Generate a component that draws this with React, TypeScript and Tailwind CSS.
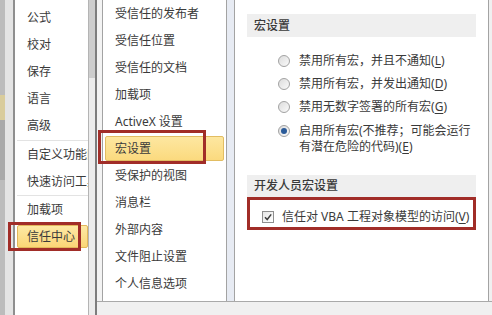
import React from "react";

const navTop = ["公式", "校对", "保存", "语言", "高级"];
const navMid = ["自定义功能区", "快速访问工具栏"];

const centerItems = [
  "受信任的发布者",
  "受信任位置",
  "受信任的文档",
  "加载项",
  "ActiveX 设置",
  "宏设置",
  "受保护的视图",
  "消息栏",
  "外部内容",
  "文件阻止设置",
  "个人信息选项",
];

function NavItem({ label, active }: { label: string; active?: boolean }) {
  return (
    <div className="h-[27px] pl-[2px] py-[2px]">
      <div
        className={
          active
            ? "flex h-full items-center whitespace-nowrap rounded-[2px] border border-[#e2b75a] bg-gradient-to-b from-[#fde9a4] to-[#fbd676] pl-[9px]"
            : "flex h-full items-center whitespace-nowrap pl-[10px]"
        }
      >
        {label}
      </div>
    </div>
  );
}

function MenuItem({ label, active }: { label: string; active?: boolean }) {
  return (
    <div className="h-[27px] px-[2px] py-[1px]">
      <div
        className={
          active
            ? "flex h-full items-center whitespace-nowrap rounded-[2px] border border-[#e2bd62] bg-gradient-to-b from-[#fde7a0] to-[#fbda7e] pl-[9px]"
            : "flex h-full items-center whitespace-nowrap pl-[10px]"
        }
      >
        {label}
      </div>
    </div>
  );
}

function Radio({ checked }: { checked?: boolean }) {
  return (
    <span className="flex h-[12px] w-[12px] shrink-0 items-center justify-center rounded-full border border-[#a2a2a2] bg-gradient-to-br from-[#dcdcdc] to-[#fafafa]">
      {checked && <span className="h-[6px] w-[6px] rounded-full bg-[#2b5b99]" />}
    </span>
  );
}

function Key({ k }: { k: string }) {
  return (
    <>
      (<span className="underline underline-offset-2">{k}</span>)
    </>
  );
}

export default function App() {
  return (
    <div className="relative flex h-[315px] w-[492px] overflow-hidden bg-[#f0f0f0] font-['Noto_Sans','Noto_Sans_CJK_SC',sans-serif] text-[12px] leading-[16px] text-[#3a3a3a]">
      {/* blurred excel strip */}
      <div className="flex h-full flex-col w-[5px] bg-[#bcbcbc]">
        <div className="h-[95px]" />
        <div className="h-[25px] bg-[#d9cc9c]" />
        <div className="h-[60px] bg-[#a9a9a9]" />
      </div>
      <div className="h-full w-[8px] bg-[#e4e4e4]" />
      <div className="h-full w-[2px] bg-[#8f8f8f]" />

      {/* left nav */}
      <div className="h-full w-[73px] overflow-hidden bg-white pt-[4px]">
        {navTop.map((n) => (
          <NavItem key={n} label={n} />
        ))}
        <div className="flex h-[2px] items-end pl-[2px]">
          <div className="h-px w-full bg-[#e3e3e3]" />
        </div>
        {navMid.map((n) => (
          <NavItem key={n} label={n} />
        ))}
        <div className="ml-[2px] h-px bg-[#e3e3e3]" />
        <NavItem label="加载项" />
        <NavItem label="信任中心" active />
      </div>

      {/* scrollbar */}
      <div className="h-full w-px bg-[#b4b4b4]" />
      <div className="flex h-full w-[6px] flex-col bg-[#ececec]">
        <div className="h-[78px] bg-[#cdcdcd]" />
      </div>
      <div className="h-full w-[2px] bg-[#7d7d7d]" />

      {/* dialog body */}
      <div className="flex h-full flex-1 flex-col">
        <div className="flex h-[302px] border-b border-[#a9a9a9]">
          <div className="w-[5px] bg-[#f3f3f3]" />
          <div className="w-[125px] border-x border-[#a3a3a3] bg-white">
            {centerItems.map((c) => (
              <MenuItem key={c} label={c} active={c === "宏设置"} />
            ))}
          </div>
          <div className="w-[7px] bg-[#e7ebf3]" />
          <div className="w-[255px] border-x border-[#a3a3a3] bg-white pt-[14px]">
            <div className="ml-[12px] flex h-[23px] w-[229px] items-center bg-[#efefef] pl-[7px] font-medium">
              宏设置
            </div>
            <div className="mt-[12px] flex flex-col pl-[43px]">
              <div className="flex h-[23px] items-center gap-[9px]">
                <Radio />
                <span>
                  禁用所有宏，并且不通知<Key k="L" />
                </span>
              </div>
              <div className="flex h-[23px] items-center gap-[9px]">
                <Radio />
                <span>
                  禁用所有宏，并发出通知<Key k="D" />
                </span>
              </div>
              <div className="flex h-[23px] items-center gap-[9px]">
                <Radio />
                <span>
                  禁用无数字签署的所有宏<Key k="G" />
                </span>
              </div>
              <div className="flex items-start gap-[9px] pt-[5px]">
                <span className="mt-[2px]">
                  <Radio checked />
                </span>
                <span className="whitespace-nowrap">
                  启用所有宏(不推荐；可能会运行
                  <br />
                  有潜在危险的代码)<Key k="E" />
                </span>
              </div>
            </div>
            <div className="ml-[12px] mt-[20px] flex h-[22px] w-[229px] items-center bg-[#efefef] pl-[7px] font-medium">
              开发人员宏设置
            </div>
            <div className="ml-[12px] flex h-[33px] w-[229px] items-center gap-[8px] border-[3px] border-[#a12d28] pl-[12px] pt-[6px]">
              <span className="flex h-[12px] w-[12px] shrink-0 items-center justify-center border border-[#8e8e8e] bg-gradient-to-br from-[#e6e6e6] to-white">
                <svg width="10" height="10" viewBox="0 0 10 10">
                  <path d="M2 5.2 L4.2 7.5 L8.2 2.4" fill="none" stroke="#3c3c3c" strokeWidth="1.5" />
                </svg>
              </span>
              <span className="whitespace-nowrap">
                信任对 VBA 工程对象模型的访问<Key k="V" />
              </span>
            </div>
          </div>
          <div className="flex-1 bg-[#f0f0f0]" />
        </div>
      </div>

      {/* annotation boxes */}
      <div className="absolute left-[8px] top-[222px] h-[29px] w-[73px] border-[3px] border-[#a12d28]" />
      <div className="absolute left-[98px] top-[130px] h-[34px] w-[108px] border-[3px] border-[#a12d28]" />
    </div>
  );
}
